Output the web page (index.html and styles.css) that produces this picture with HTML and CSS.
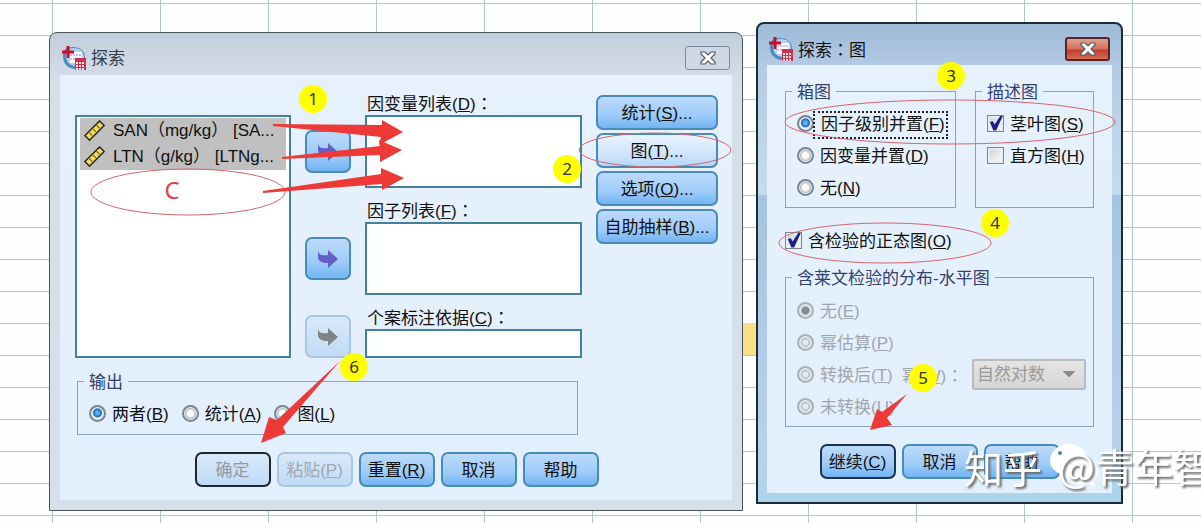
FILE: index.html
```html
<!DOCTYPE html>
<html lang="zh-CN">
<head>
    <meta charset="UTF-8">
    <meta name="viewport" content="width=device-width, initial-scale=1.0">
    <title>探索</title>
    <link rel="stylesheet" href="styles.css">
</head>
<body>
    <!-- 图标定义 -->
    <svg class="defs" width="0" height="0" aria-hidden="true">
        <symbol id="app" viewBox="0 0 24 24">
            <path d="M10 1c9 0 13 4 13 11v11H14C6 23 1 18 1 10c0-6 3-9 9-9z" fill="#4a8cc2"/>
            <path d="M11 2c8 0 11 4 11 10v8h-7C8 20 4 16 4 10c0-5 3-8 7-8z" fill="#b7d3ea"/>
            <path d="M8 6h12v11H8z" fill="#fafaff"/>
            <path d="M8 9h12M8 13h12" stroke="#8d8fc8" stroke-width="1" stroke-dasharray="2 1"/>
            <path d="M13 12h11v12H13z" fill="#cf3050"/>
            <path d="M14 17h9M14 20h9M14 23h9" stroke="#fbe6ea" stroke-width="2" stroke-dasharray="2 1"/>
            <path d="M6 0v12M0 6h12" stroke="#c8102e" stroke-width="3"/>
        </symbol>
        <symbol id="ruler" viewBox="0 0 24 24">
            <path d="M1 17 17 1l5 5L6 22z" fill="#f0dc62" stroke="#2b2818" stroke-width="1.6"/>
            <path d="m5 13 4 4m0-8 4 4m0-8 4 4" stroke="#7d6a20" stroke-width="1.4"/>
        </symbol>
        <symbol id="move" viewBox="0 0 20 18">
            <path d="M0 1c1 4 4 5 10 4V0l10 9-10 9v-5C4 13 0 11 0 7z" fill="currentColor"/>
        </symbol>
        <symbol id="cross" viewBox="0 0 16 14">
            <path d="M1 1h4l3 3 3-3h4v2l-4 4 4 4v2h-4l-3-3-3 3H1v-2l4-4-4-4z" fill="#fff" stroke="#555a66" stroke-width="1.2"/>
        </symbol>
    </svg>

    <div class="cell-selected"></div>

    <!-- 探索 -->
    <section class="window explore">
        <header class="titlebar">
            <svg class="app-icon"><use href="#app"/></svg>
            <h1>探索</h1>
            <button type="button" class="close" aria-label="关闭"><svg><use href="#cross"/></svg></button>
        </header>
        <form class="content">
            <div class="fields">
                <ul class="variables">
                    <li><svg><use href="#ruler"/></svg>SAN（mg/kg） [SA...</li>
                    <li><svg><use href="#ruler"/></svg>LTN（g/kg） [LTNg...</li>
                </ul>

                <button type="button" class="btn move" aria-label="移到因变量列表"><svg><use href="#move"/></svg></button>
                <div class="target">
                    <label for="dependent">因变量列表(<u>D</u>)<span lang="zh-TW" class="colon">：</span></label>
                    <textarea id="dependent"></textarea>
                </div>

                <button type="button" class="btn move" aria-label="移到因子列表"><svg><use href="#move"/></svg></button>
                <div class="target">
                    <label for="factor">因子列表(<u>F</u>)<span lang="zh-TW" class="colon">：</span></label>
                    <textarea id="factor"></textarea>
                </div>

                <button type="button" class="btn move last" aria-label="移到个案标注依据" disabled><svg><use href="#move"/></svg></button>
                <div class="target">
                    <label for="case-label">个案标注依据(<u>C</u>)<span lang="zh-TW" class="colon">：</span></label>
                    <input type="text" id="case-label">
                </div>

                <div class="side">
                    <button type="button" class="btn">统计(<u>S</u>)...</button>
                    <button type="button" class="btn hot">图(<u>T</u>)...</button>
                    <button type="button" class="btn">选项(<u>O</u>)...</button>
                    <button type="button" class="btn">自助抽样(<u>B</u>)...</button>
                </div>
            </div>

            <fieldset class="output">
                <legend>输出</legend>
                <label class="option"><input type="radio" name="output" checked>两者(<u>B</u>)</label>
                <label class="option"><input type="radio" name="output">统计(<u>A</u>)</label>
                <label class="option"><input type="radio" name="output">图(<u>L</u>)</label>
            </fieldset>

            <div class="actions">
                <button type="button" class="btn default" disabled>确定</button>
                <button type="button" class="btn" disabled>粘贴(<u>P</u>)</button>
                <button type="button" class="btn">重置(<u>R</u>)</button>
                <button type="button" class="btn">取消</button>
                <button type="button" class="btn">帮助</button>
            </div>
        </form>
    </section>

    <!-- 探索：图 -->
    <section class="window plots">
        <header class="titlebar">
            <svg class="app-icon"><use href="#app"/></svg>
            <h1>探索<span lang="zh-TW" class="colon">：</span>图</h1>
            <button type="button" class="close" aria-label="关闭"><svg><use href="#cross"/></svg></button>
        </header>
        <form class="content">
            <div class="groups">
                <fieldset>
                    <legend>箱图</legend>
                    <label class="option"><input type="radio" name="box" checked><span class="focused">因子级别并置(<u>F</u>)</span></label>
                    <label class="option"><input type="radio" name="box">因变量并置(<u>D</u>)</label>
                    <label class="option"><input type="radio" name="box">无(<u>N</u>)</label>
                </fieldset>
                <fieldset>
                    <legend>描述图</legend>
                    <label class="option"><input type="checkbox" checked>茎叶图(<u>S</u>)</label>
                    <label class="option"><input type="checkbox">直方图(<u>H</u>)</label>
                </fieldset>
            </div>

            <label class="option normality"><input type="checkbox" checked>含检验的正态图(<u>O</u>)</label>

            <fieldset class="levene" disabled>
                <legend>含莱文检验的分布-水平图</legend>
                <label class="option"><input type="radio" name="levene" checked>无(<u>E</u>)</label>
                <label class="option"><input type="radio" name="levene">幂估算(<u>P</u>)</label>
                <div class="transformed">
                    <label class="option"><input type="radio" name="levene">转换后(<u>T</u>)</label>
                    <label for="power">幂(<u>W</u>)<span lang="zh-TW" class="colon">：</span></label>
                    <select id="power">
                        <option>自然对数</option>
                    </select>
                </div>
                <label class="option"><input type="radio" name="levene">未转换(<u>U</u>)</label>
            </fieldset>

            <div class="actions">
                <button type="button" class="btn default">继续(<u>C</u>)</button>
                <button type="button" class="btn">取消</button>
                <button type="button" class="btn">帮助</button>
            </div>
        </form>
    </section>

    <!-- 步骤标注 -->
    <svg class="notes" width="1201" height="523" viewBox="0 0 1201 523">
        <g class="ring">
            <ellipse cx="188" cy="192" rx="97" ry="23"/>
            <ellipse cx="655" cy="150" rx="76" ry="17"/>
            <ellipse cx="950" cy="122" rx="165" ry="22"/>
            <ellipse cx="885" cy="243" rx="106" ry="20"/>
        </g>
        <g class="arrow">
            <path d="M273 124 382 125V120l21 12-24 13 2-8-108-11z"/>
            <path d="m282 157 98-11-1-6 23 10-22 12v-7l-98 4z"/>
            <path d="m263 191 118-17v-6l23 10-22 12v-6l-119 9z"/>
            <path d="m340 361-57 66 3 6-25 10 8-26 8 3z"/>
            <path d="m907 394-20 24 5 7-22 5 7-21 5 3z"/>
        </g>
        <g class="badge">
            <circle cx="313" cy="99" r="14"/><text x="313" y="105">1</text>
            <circle cx="567" cy="169" r="14"/><text x="567" y="175">2</text>
            <circle cx="951" cy="76" r="14"/><text x="951" y="82">3</text>
            <circle cx="995" cy="223" r="14"/><text x="995" y="229">4</text>
            <circle cx="923" cy="378" r="14"/><text x="923" y="384">5</text>
            <circle cx="354" cy="367" r="14"/><text x="354" y="373">6</text>
        </g>
        <text class="variable-c" x="172" y="199">C</text>
        <g class="bubbles">
            <path d="M1068 444c11 0 20 8 20 17s-9 16-20 16l-10 3 2-6c-6-3-10-8-10-13 0-9 8-17 18-17z"/>
            <path d="M1081 457c9 0 17 6 17 14 0 4-2 8-5 10l2 6-7-3c-12 3-24-3-24-13 0-8 8-14 17-14z"/>
            <circle cx="1060" cy="453" r="2"/>
        </g>
        <g class="watermark">
            <text x="964" y="483">知乎</text>
            <text x="1058" y="482">@青年智</text>
        </g>
    </svg>
</body>
</html>
```

FILE: styles.css
```css
* {
    box-sizing: border-box;
}

body {
    margin: 0;
    min-height: 100vh;
    overflow: hidden;
    position: relative;
    font-family: "Liberation Sans", "Noto Sans CJK SC", sans-serif;
    font-size: 17px;
    line-height: 20px;
    color: #111;
    background-color: #fdfffe;
    background-image:
        linear-gradient(#b3c6cc 1px, transparent 1px),
        linear-gradient(90deg, #b3c6cc 1px, transparent 1px);
    background-size: 108px 32px;
    background-position: 52px 3px;
}

.defs {
    position: absolute;
}

.cell-selected {
    position: absolute;
    left: 700px;
    top: 323px;
    width: 108px;
    height: 32px;
    background: #fbdf86;
}

/* 窗口 */
.window {
    position: absolute;
    padding: 0 10px 10px;
    border: 1px solid #4c545c;
    border-radius: 8px 8px 0 0;
}

.explore {
    left: 49px;
    top: 32px;
    width: 694px;
    background: linear-gradient(#c3cedc, #d5dfea 50px, #d6e0ea);
}

.plots {
    left: 756px;
    top: 22px;
    width: 367px;
    border: 2px solid #1d2c34;
    padding: 0 9px 9px;
    background: linear-gradient(#9dbad8, #b4cbe4 44px, #c4dcef 170px, #a6c3e2 172px, #b9d2ec 90%, #aad4ea);
}

.titlebar {
    display: flex;
    align-items: center;
    height: 42px;
    padding: 8px 2px 0;
}

.plots .titlebar {
    height: 41px;
}

.titlebar h1 {
    flex: 1;
    margin: 0 0 0 5px;
    padding-top: 2px;
    font-size: 17px;
    font-weight: normal;
    color: #333d4d;
}

.plots h1 {
    color: #111;
}

.app-icon {
    width: 24px;
    height: 24px;
}

.close {
    display: flex;
    align-items: center;
    justify-content: center;
    width: 45px;
    height: 24px;
    padding: 0;
    border: 1px solid #7f8b9b;
    border-radius: 3px;
    background: #cdd8e4;
}

.close svg {
    width: 16px;
    height: 14px;
}

.plots .close {
    border: 2px solid #5a2426;
    background: linear-gradient(#e3a090, #d4705c 50%, #c0402c 55%, #d56a52);
}

.content {
    padding: 20px 14px 13px 15px;
    background: linear-gradient(#e6f1fd, #e2effc);
}

.plots .content {
    padding: 16px 18px 14px;
}

/* 按钮 */
.btn {
    height: 35px;
    padding: 2px 0 0;
    font: inherit;
    color: #111;
    white-space: nowrap;
    border: 2px solid #4a8ab6;
    border-radius: 7px;
    background: linear-gradient(#bcdafa, #9ecbf8 60%, #72b4f2);
}

.btn.hot {
    background: linear-gradient(#e8f3ff, #cfe4fb 60%, #b6d8fa);
}

.btn:disabled {
    color: #a0a8b0;
    border-color: #a9c6de;
    background: linear-gradient(#d9e9fa, #c0dbf6);
}

.btn.default {
    border-color: #1d3450;
}

.btn.default:disabled {
    color: #93999f;
    border-color: #20262e;
}

.colon {
    font-family: "Noto Sans CJK TC", sans-serif;
}

/* 变量选择 */
.fields {
    display: grid;
    grid-template-columns: 216px 46px 1fr 122px;
    grid-template-rows: 93px 93px 49px;
    gap: 14px;
}

.variables {
    grid-row: 1 / 4;
    margin: 20px 0 0;
    padding: 1px 3px;
    list-style: none;
    background: #fff;
    border: 2px solid #42809c;
}

.variables li {
    display: flex;
    align-items: center;
    height: 26px;
    overflow: hidden;
    white-space: pre;
    background: #c0c0c0;
}

.variables svg {
    width: 22px;
    height: 22px;
    margin: 0 7px 0 4px;
}

.move {
    grid-column: 2;
    align-self: end;
    height: 43px;
    margin-bottom: 15px;
    padding: 0;
    color: #625fc8;
}

.move.last {
    margin-bottom: 0;
}

.move:disabled {
    color: #7f8583;
}

.move svg {
    display: block;
    width: 20px;
    height: 18px;
    margin: 0 auto;
}

.target {
    grid-column: 3;
    display: flex;
    flex-direction: column;
}

.target label {
    height: 20px;
    padding-left: 2px;
    line-height: 16px;
}

.target textarea,
.target input {
    flex: 1;
    width: 100%;
    min-height: 0;
    padding: 4px;
    font: inherit;
    resize: none;
    background: #fff;
    border: 2px solid #42809c;
    border-radius: 0;
}

.side {
    grid-column: 4;
    grid-row: 1 / 4;
    display: flex;
    flex-direction: column;
    gap: 3px;
}

/* 分组框 */
fieldset {
    min-width: 0;
    margin: 0;
    padding: 6px 10px 4px;
    border: 1px solid #8aa5b2;
}

legend {
    height: 20px;
    margin-left: -4px;
    padding: 2px 5px 0;
    color: #34406e;
}

.output {
    display: flex;
    gap: 12px;
    width: 501px;
    margin: 13px 0 0 2px;
    padding-bottom: 5px;
}

.option {
    display: flex;
    align-items: center;
    height: 32px;
    padding-top: 3px;
    white-space: nowrap;
}

.option input {
    flex: none;
    appearance: none;
    width: 17px;
    height: 17px;
    margin: 0 6px 3px 1px;
}

.option input[type="radio"] {
    border: 2px solid #7a858f;
    border-radius: 50%;
    background: radial-gradient(circle, #fff 3px, #b4bec8 5px, #eef2f6 6px);
}

.option input[type="radio"]:checked {
    background: radial-gradient(circle at 50% 45%, #64baf4 1px, #1a6cc0 4px, #e3edf6 5px);
}

.option input[type="radio"]:disabled {
    border-color: #a8b0b8;
    background: radial-gradient(circle, #e4ecf4 2px, #b4bcc4 4px, #dfe7ef 5px);
}

.option input[type="radio"]:disabled:checked {
    background: radial-gradient(circle, #8a929a 1px, #7c848c 3px, #dfe7ef 5px);
}

.option input[type="checkbox"] {
    display: grid;
    border: 1px solid #7d868e;
    background: linear-gradient(135deg, #c9ced4, #fff);
    box-shadow: inset 0 0 0 2px #e8edf2;
}

.option input[type="checkbox"]:checked::before {
    content: "";
    background: #1c1c8c;
    clip-path: polygon(12% 44%, 32% 38%, 44% 60%, 84% 0, 100% 0, 54% 100%, 36% 100%);
}

.focused {
    margin: 0 -3px 0 -7px;
    padding: 2px 1px 2px 6px;
    border: 2px dotted #222;
}

.groups {
    display: grid;
    grid-template-columns: 171px 1fr;
    gap: 19px;
}

.normality {
    width: fit-content;
    margin: 16px 0 11px -1px;
}

.levene {
    padding: 7px 7px 4px 10px;
    color: #a0a6ac;
}

.transformed {
    display: flex;
    align-items: center;
}

.transformed > label + label {
    margin-left: 9px;
    padding-top: 3px;
}

.transformed select {
    appearance: none;
    width: 114px;
    height: 31px;
    margin-left: auto;
    padding: 2px 3px 0;
    font: inherit;
    color: #999;
    opacity: 1;
    border: 2px solid #b9bcbe;
    border-radius: 2px;
    background:
        linear-gradient(to bottom left, #8e8e8e 50%, transparent 51%) right 15px top 10px / 7px 7px no-repeat,
        linear-gradient(to bottom right, #8e8e8e 50%, transparent 51%) right 8px top 10px / 7px 7px no-repeat,
        linear-gradient(#e4e4e4, #d6d6d6);
}

/* 左半边取右上角，右半边取左上角，拼成向下箭头 */
.transformed select:disabled {
    background:
        linear-gradient(to top right, transparent 50%, #8e8e8e 51%) right 15px top 10px / 7px 7px no-repeat,
        linear-gradient(to top left, transparent 50%, #8e8e8e 51%) right 8px top 10px / 7px 7px no-repeat,
        linear-gradient(#e4e4e4, #d6d6d6);
}

.actions {
    display: flex;
    justify-content: center;
    gap: 6px;
    margin-top: 17px;
}

.actions .btn {
    width: 76px;
}

/* 标注层 */
.notes {
    position: absolute;
    left: 0;
    top: 0;
    pointer-events: none;
}

.ring {
    fill: none;
    stroke: #d8646a;
    stroke-width: 1;
}

.arrow {
    fill: #ee3a36;
}

.badge circle {
    fill: #ffff00;
}

.badge text {
    font-family: "Noto Sans", sans-serif;
    font-size: 17px;
    text-anchor: middle;
    fill: #333;
}

.variable-c {
    font-family: "Noto Sans", sans-serif;
    font-size: 24px;
    text-anchor: middle;
    fill: #e0444a;
}

.bubbles {
    fill: #fff;
}

.bubbles circle {
    fill: #4c8a94;
}

.watermark {
    font-family: "Noto Sans CJK SC", sans-serif;
    font-size: 39px;
    fill: #fff;
    filter: drop-shadow(2px 2px 1px #666);
}
```
